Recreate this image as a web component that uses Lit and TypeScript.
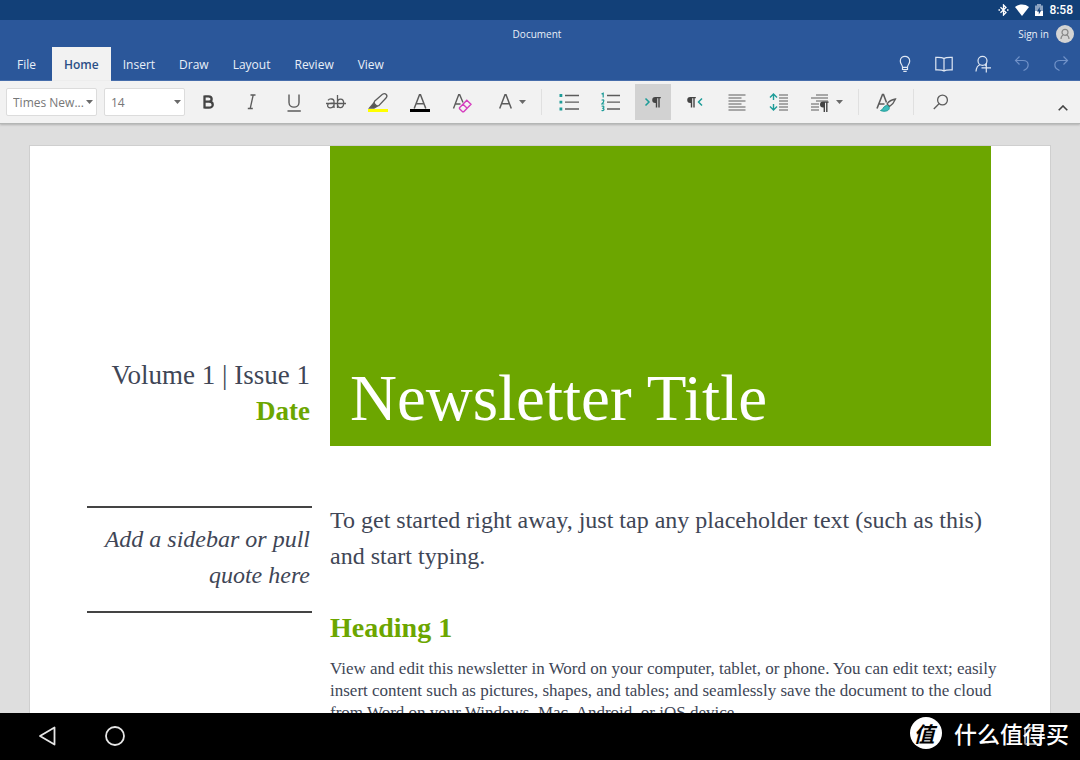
import { LitElement, html, css, svg } from "lit";
import { customElement, state } from "lit/decorators.js";
import { classMap } from "lit/directives/class-map.js";

const caret = html`<svg class="caret" width="7" height="4" viewBox="0 0 7 4" aria-hidden="true"><path d="M0 0h7L3.500 4z" fill="#6a6a6a"/></svg>`;

const pilcrow = (x: number, y: number) => svg`
  <path transform="translate(${x} ${y})" fill="#444" stroke="none" d="M8.800 0H3.200A3 3 0 0 0 3.200 6H3.800V10.500H5.200V1.200H6.300V10.500H7.700V1.200H8.800z"/>`;

const ic = (w: number, h: number, body: unknown) =>
  html`<svg width=${w} height=${h} viewBox="0 0 ${w} ${h}" fill="none" stroke="#5c5c5c" stroke-width="1.300" aria-hidden="true">${body}</svg>`;

const letterA = svg`<path d="M0.700 14.500L6 0.800H7L12.300 14.500M2.500 9.700H10.500" stroke-width="1.500"/>`;

const icons = {
  bold: ic(20, 20, svg`<path d="M4.500 3.500V16.500M4.500 4.300H8.500C12.700 4.300 12.700 9.600 8.500 9.600H4.500M9 9.600C14 9.600 14 15.700 9 15.700H4.500" stroke="#444" stroke-width="2.300"/>`),
  italic: ic(20, 20, svg`<path d="M8.500 3H13.500M5.800 16.500H10.800M11.200 3L8.200 16.500"/>`),
  underline: ic(20, 22, svg`<path d="M5 3.500V11.500C5 17.700 15 17.700 15 11.500V3.500M3.500 20H16.800" stroke-width="1.400"/>`),
  strike: ic(22, 20, svg`<path d="M3 8.300C4.500 6.300 9 6.400 9 9.500V16M9 11C5.500 11 2.600 11.400 2.600 13.500C2.600 16.700 7.500 16.600 9 13.200M12.500 3V16M12.500 10.500C12.800 5.800 18.700 5.900 18.700 11C18.700 16.600 13.300 17 12.500 12.500M1 11.500H21"/>`),
  highlight: ic(22, 22, svg`<path d="M1 19.500H21" stroke="#ffff00" stroke-width="3"/><path d="M7.500 10.300L15.500 3.200C18.500 1.300 21.300 4.500 19 7L11.800 14.700L8.600 15.100L6.800 13.200z"/><path d="M6.800 12L10 15.300L7 17H2.500z" fill="#555"/>`),
  color: ic(22, 22, svg`<path d="M1 19.500H21" stroke="#000" stroke-width="3"/><g transform="translate(4.500 3)">${letterA}</g>`),
  clear: ic(22, 22, svg`<path d="M2.500 17.500L7.700 3.800H8.700L12 11.500M4.200 13H9.500" stroke-width="1.400"/><path d="M8.500 16.700L15.800 9.300L20 13.300L12.700 20.700H11.600L8.500 17.800zM12 13.200L16.200 17.200" stroke="#d63fbf" stroke-width="1.400"/>`),
  fontA: ic(13, 16, letterA),
  bullets: ic(20, 20, svg`<path d="M6 3.500H20M6 10.200H20M6 17H20"/><path d="M0.500 3.500H3.300M0.500 10.200H3.300M0.500 17H3.300" stroke="#1d9c98" stroke-width="2.800"/>`),
  numbers: ic(20, 20, svg`<path d="M6 3.500H19M6 10.200H19M6 17H19"/><path d="M0.500 2L2.200 1.200V5.500M0.600 8.200C3.500 6.800 3.500 9.500 0.900 12H3.300M0.600 14.300C3.800 13.200 3.200 16.300 1.300 16.300C3.800 16.300 3.500 19.300 0.500 18.500" stroke="#1d9c98" stroke-width="1.200"/>`),
  ltr: ic(18, 16, svg`<path d="M1.500 4.500L5 8L1.500 11.500" stroke="#1d9c98" stroke-width="1.500"/>${pilcrow(8, 3)}`),
  rtl: ic(18, 16, svg`<path d="M16 4.500L12.500 8L16 11.500" stroke="#1d9c98" stroke-width="1.500"/>${pilcrow(1, 3)}`),
  align: ic(18, 18, svg`<path d="M0.500 2H17.500M0.500 5H13.500M0.500 8H17.500M0.500 11H13.500M0.500 14H17.500M0.500 17H17.500" stroke-width="1.100"/>`),
  spacing: ic(20, 20, svg`<path d="M10 3H19M10 6H19M10 9H19M10 12H19M10 15H19M10 18H19" stroke-width="1.100"/><path d="M4.500 8V2.500M1 5.500L4.500 2L8 5.500M4.500 12V17.500M1 14.500L4.500 18L8 14.500" stroke="#1d9c98" stroke-width="1.400"/>`),
  para: ic(18, 20, svg`<path d="M5 3H17M0 6H17M5 9H17M0 12H8M0 15H8M0 18H8" stroke-width="1.100"/>${pilcrow(8.8, 9.5)}`),
  styles: ic(22, 22, svg`<path d="M2 17.500L7.500 3.500H8.500L11.500 11.500M4 13H9.500" stroke-width="1.600"/><path d="M12 13C14 10 17.500 8.500 20.500 8C19.500 10.500 17.500 13.500 14.500 15.500z"/><path d="M5.500 19.500C8 19.500 8 15 11.500 14.500C15 14.800 15 18.500 12.500 19.600C10.500 20.500 7.500 20.400 5.500 19.500z" fill="#3dbdbb" stroke="#1d9c98" stroke-width="1"/>`),
  search: ic(16, 18, svg`<circle cx="9.500" cy="7" r="4.900"/><path d="M6 10.700L0.800 16"/>`),
};

const tools = [
  ["Bold", icons.bold], ["Italic", icons.italic], ["Underline", icons.underline],
  ["Strikethrough", icons.strike], ["Highlight", icons.highlight], ["Font color", icons.color],
  ["Clear formatting", icons.clear], ["Font effects", icons.fontA, "split"], null,
  ["Bullets", icons.bullets], ["Numbering", icons.numbers], ["Left to right", icons.ltr, "on"],
  ["Right to left", icons.rtl], ["Align", icons.align], ["Line spacing", icons.spacing],
  ["Paragraph", icons.para, "split"], null, ["Styles", icons.styles], null, ["Find", icons.search],
] as const;

const white = (w: number, h: number, body: unknown) =>
  html`<svg width=${w} height=${h} viewBox="0 0 ${w} ${h}" fill="none" stroke="#dfe7f3" stroke-width="1.200" aria-hidden="true">${body}</svg>`;

const actions = [
  ["Tell me", white(20, 20, svg`<path d="M7.500 13.300C7.500 10.700 5.300 10.200 5.300 7C5.300 0.800 14.700 0.800 14.700 7C14.700 10.200 12.500 10.700 12.500 13.300zM7.500 13.300V15.500H12.500V13.300M8.300 17.300H11.700"/>`)],
  ["Read", white(20, 20, svg`<path d="M10 4.500C8 3 5 3.300 1.800 3.300V15.800C5 15.800 8 15.500 10 17C12 15.500 15 15.800 18.200 15.800V3.300C15 3.300 12 3 10 4.500zV17"/>`)],
  ["Share", white(20, 20, svg`<circle cx="9.500" cy="6.800" r="4.500"/><path d="M3 17.500C3.300 13.500 5 11.500 7 10.800M12 10.800L13 11.800M13.300 9V18.500M8.500 13.800H18"/>`)],
  ["Undo", white(20, 20, svg`<path d="M7.500 2.500L3.500 6.500L7.500 10.500M3.500 6.500H11C17.500 6.500 18 14 11.500 16.500" stroke="#7192c8"/>`)],
  ["Redo", white(20, 20, svg`<path d="M12.500 2.500L16.500 6.500L12.500 10.500M16.500 6.500H9C2.500 6.500 2 14 8.500 16.500" stroke="#7192c8"/>`)],
] as const;

@customElement("app-root")
export class AppRoot extends LitElement {
  @state() private tab = "Home";

  static styles = css`
    :host { display: flex; flex-direction: column; height: 100vh; overflow: hidden; background: #dedede; font-family: "Open Sans", "Noto Sans", sans-serif; font-size: 12px; }
    * { box-sizing: border-box; }
    svg { display: block; flex: none; }
    button { border: 0; margin: 0; padding: 0; background: none; font: inherit; color: inherit; display: flex; align-items: center; justify-content: center; }
    h1, h2, p { margin: 0; }
    .status { flex: none; height: 20px; background: #124078; color: #fff; display: flex; align-items: center; justify-content: flex-end; gap: 6px; padding-right: 7px; font: 500 12px/20px Roboto, sans-serif; }
    .head { flex: none; background: #2b579a; color: #e9eff8; border-bottom: 1px solid #3e68ab; }
    .titlebar { height: 27px; display: grid; grid-template-columns: 1fr auto 1fr; align-items: center; padding-right: 6px; font-size: 10px; }
    .doc { grid-column: 2; }
    .signin { justify-self: end; gap: 7px; }
    .tabrow { display: flex; justify-content: space-between; height: 33px; }
    .tabs { display: flex; padding-left: 5px; }
    .tab { padding: 0 12px; height: 34px; }
    .tab:first-child { margin-right: 4px; }
    .tab.active { background: #f2f2f2; color: #2b4f86; font-weight: 600; }
    .actions { display: flex; gap: 19px; padding-right: 9px; }
    .ribbon { flex: none; height: 43px; background: #f2f2f2; display: flex; align-items: center; gap: 6px; padding: 0 6px; border-bottom: 1px solid #b4b6b5; box-shadow: 0 1px 2px #b0b0b0; position: relative; }
    .field { display: grid; align-items: center; margin-right: 1px; }
    .field select { grid-area: 1 / 1; appearance: none; height: 28px; width: 100%; border: 1px solid #dcdcdc; border-radius: 2px; background: #fff; color: #777; font: inherit; padding: 0 0 0 6px; }
    .field .caret { grid-area: 1 / 1; justify-self: end; margin-right: 4px; pointer-events: none; }
    .name { width: 91px; }
    .size { width: 81px; }
    .tool { width: 36px; height: 36px; flex: none; }
    .tool.on { background: #d2d2d2; }
    .tool.split { width: 46px; justify-content: flex-end; gap: 7px; padding-right: 6px; }
    .sep { width: 1px; height: 26px; background: #e0e0e0; margin: 0 3px; flex: none; }
    .collapse { margin-left: auto; align-self: flex-end; width: 22px; height: 30px; }
    .canvas { flex: 1; min-height: 0; overflow: hidden; padding: 21px 29px 0; }
    .page { background: #fff; border: 1px solid #cfcfcf; border-bottom: 0; min-height: 100%; padding: 0 47px 0 57px; display: grid; grid-template-columns: 225px 1fr; column-gap: 18px; align-content: start; font-family: "Liberation Serif", serif; color: #404656; }
    .issue { align-self: end; padding: 0 2px 17px 0; text-align: right; font-size: 27px; line-height: 36px; }
    .date { color: #6ca600; font-weight: 700; }
    .banner { height: 300px; margin-right: 12px; background: #6ca600; color: #fff; display: flex; align-items: flex-end; padding: 0 20px 11px; }
    .banner h1 { font-size: 65px; line-height: 74px; font-weight: 400; }
    .quote { align-self: start; margin-top: 60px; padding: 13px 2px 18px 0; border: solid #444; border-width: 2px 0; text-align: right; font-size: 24px; line-height: 36px; font-style: italic; }
    .story { margin-top: 56px; }
    .lead { font-size: 24px; line-height: 36px; }
    .story h2 { margin: 36px 0 12px; font-size: 28px; line-height: 36px; color: #6ca600; }
    .body { font-size: 17px; line-height: 22px; }
    .nav { flex: none; height: 47px; background: #000; color: #fff; display: flex; align-items: center; gap: 46px; padding: 0 38px 2px 37px; position: relative; }
    .recent { margin-left: auto; }
    .mark { position: absolute; right: 11px; top: 4px; display: flex; align-items: center; gap: 12px; font: 500 23px/32px "Noto Sans CJK SC", sans-serif; }
    .seal { width: 32px; height: 32px; border-radius: 50%; background: #fff; color: #000; padding-right: 4px; text-align: center; font-size: 21px; font-weight: 700; font-style: italic; }
  `;

  render() {
    return html`
      <div class="status">
        <svg width="11" height="12" viewBox="0 0 11 12" fill="none" stroke="#fff" stroke-width="1.300"><path d="M2.500 3.300L8 8.500L5.500 11V1L8 3.500L2.500 8.700"/><path d="M0.500 6H2M9 6H10.500"/></svg>
        <svg width="14" height="12" viewBox="0 0 14 12"><path d="M0 3C4-.3 10-.3 14 3L7 12z" fill="#fff"/></svg>
        <svg width="8" height="12" viewBox="3 0 8 12"><path d="M3 1.500H5V0H9V1.500H11V12H3z" fill="#8ba3c1"/><path d="M3 7H11V12H3z" fill="#fff"/><path d="M7.700 3L5 7.500H6.800V10.500L9.300 6.200H7.700z" fill="#124078"/></svg>
        <span>8:58</span>
      </div>
      <header class="head">
        <div class="titlebar">
          <span class="doc">Document</span>
          <button class="signin">Sign in
            <svg width="18" height="18" viewBox="0 0 18 18" fill="none" stroke="#888" stroke-width="1.200"><circle cx="9" cy="9" r="9" fill="#d4d4d4" stroke="none"/><circle cx="9" cy="7.300" r="3"/><path d="M5 14C5 11.500 6 10.500 7.300 10M13 14C13 11.500 12 10.500 10.700 10"/></svg>
          </button>
        </div>
        <div class="tabrow">
          <div class="tabs" role="tablist">
            ${["File", "Home", "Insert", "Draw", "Layout", "Review", "View"].map(t => html`<button role="tab" aria-selected=${t === this.tab} class=${classMap({ tab: true, active: t === this.tab })} @click=${() => (this.tab = t)}>${t}</button>`)}
          </div>
          <div class="actions">${actions.map(([label, icon]) => html`<button aria-label=${label}>${icon}</button>`)}</div>
        </div>
      </header>
      <div class="ribbon" role="toolbar">
        <div class="field name"><select aria-label="Font"><option>Times New...</option></select>${caret}</div>
        <div class="field size"><select aria-label="Font size"><option>14</option></select>${caret}</div>
        ${tools.map(t => t === null ? html`<span class="sep"></span>` : html`<button aria-label=${t[0]} class=${classMap({ tool: true, split: t[2] === "split", on: t[2] === "on" })}>${t[1]}${t[2] === "split" ? caret : ""}</button>`)}
        <button class="collapse" aria-label="Collapse ribbon">${ic(10, 6, svg`<path d="M0.700 5.300L5 1L9.300 5.300" stroke="#444" stroke-width="1.600"/>`)}</button>
      </div>
      <main class="canvas">
        <article class="page">
          <div class="issue"><p>Volume 1 | Issue 1</p><p class="date">Date</p></div>
          <div class="banner"><h1>Newsletter Title</h1></div>
          <aside class="quote">Add a sidebar or pull quote here</aside>
          <section class="story">
            <p class="lead">To get started right away, just tap any placeholder text (such as this) and start typing.</p>
            <h2>Heading 1</h2>
            <p class="body">View and edit this newsletter in Word on your computer, tablet, or phone. You can edit text; easily insert content such as pictures, shapes, and tables; and seamlessly save the document to the cloud from Word on your Windows, Mac, Android, or iOS device.</p>
          </section>
        </article>
      </main>
      <footer class="nav">
        <button aria-label="Back"><svg width="20" height="20" viewBox="0 0 20 20" fill="none" stroke="#e6e6e6" stroke-width="1.800" stroke-linejoin="round"><path d="M17.500 1.500V18.500L3 10z"/></svg></button>
        <button aria-label="Home"><svg width="22" height="20" viewBox="0 0 22 20" fill="none" stroke="#e6e6e6" stroke-width="1.800"><circle cx="12" cy="10" r="9"/></svg></button>
        <button class="recent" aria-label="Recent apps"><svg width="18" height="18" viewBox="0 0 18 18" fill="none" stroke="#999" stroke-width="1.800"><rect x="1" y="1" width="16" height="16" rx="1"/></svg></button>
        <div class="mark"><span class="seal">值</span><span>什么值得买</span></div>
      </footer>
    `;
  }
}
